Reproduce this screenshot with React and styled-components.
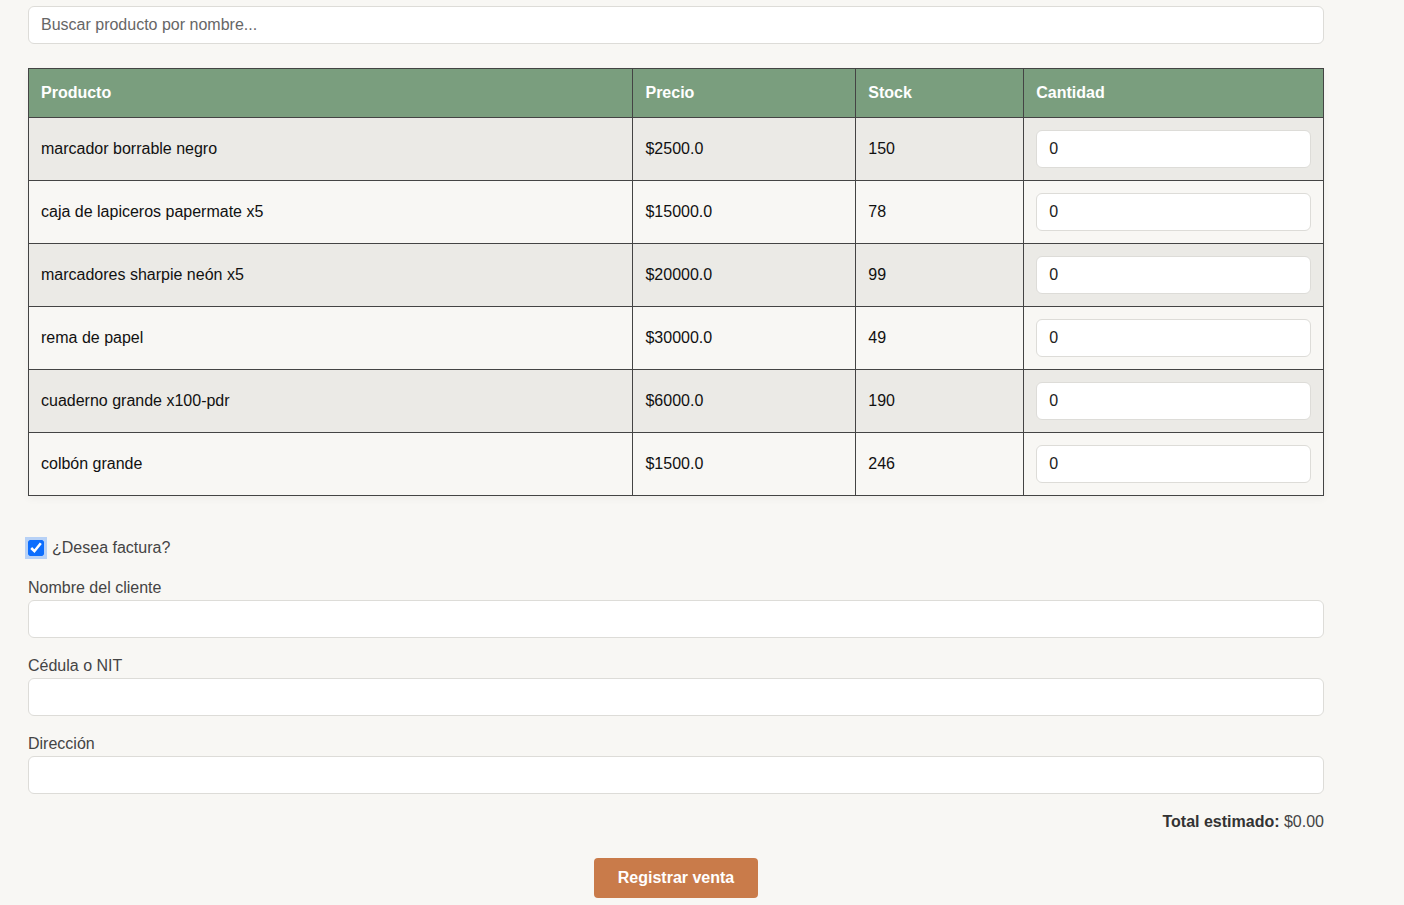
import styled, { createGlobalStyle } from "styled-components";
import { useState } from "react";

const GlobalStyle = createGlobalStyle`
  body {
    margin: 0;
    background: #f8f7f4;
    font-family: "Liberation Sans", Arial, sans-serif;
    color: #222;
  }
`;

const Page = styled.div`
  width: 1296px;
  padding: 6px 0 7px 28px;
`;

const TextInput = styled.input`
  box-sizing: border-box;
  display: block;
  width: 100%;
  height: 38px;
  padding: 0 12px;
  border: 1px solid #dddcd8;
  border-radius: 6px;
  background: #fff;
  font-family: inherit;
  font-size: 16px;
  color: #222;
  outline: none;
  &::placeholder {
    color: #666;
  }
`;

const Table = styled.table`
  width: 1296px;
  margin-top: 24px;
  border-collapse: collapse;
  box-shadow: 0 3px 8px rgba(0, 0, 0, 0.04);
  font-size: 16px;
`;

const Th = styled.th`
  width: ${(p) => p.w}px;
  height: 48px;
  padding: 0 12px;
  text-align: left;
  font-weight: bold;
  color: #fff;
  background: #7a9e7e;
  border: 1px solid #444;
`;

const Tr = styled.tr`
  background: ${(p) => (p.odd ? "#ebeae6" : "#f8f7f4")};
`;

const Td = styled.td`
  height: 62px;
  padding: 0 12px;
  border: 1px solid #444;
  color: #111;
`;

const QtyInput = styled(TextInput)`
  font-size: 16px;
`;

const CheckRow = styled.label`
  display: flex;
  align-items: center;
  gap: 8px;
  margin-top: 43px;
  font-size: 16px;
  color: #444;
`;

const Check = styled.input`
  width: 16px;
  height: 16px;
  margin: 0;
  accent-color: #0d6efd;
  border-radius: 3px;
  box-shadow: 0 0 0 3px rgba(13, 110, 253, 0.28);
`;

const Field = styled.div`
  margin-top: ${(p) => (p.first ? 22 : 19)}px;
`;

const Label = styled.div`
  font-size: 16px;
  line-height: 18px;
  margin-bottom: 3px;
  color: #444;
`;

const Total = styled.div`
  margin-top: 19px;
  text-align: right;
  font-size: 16px;
  color: #444;
  b {
    color: #333;
  }
`;

const Actions = styled.div`
  display: flex;
  justify-content: center;
  margin-top: 27px;
`;

const Button = styled.button`
  width: 164px;
  height: 40px;
  border: none;
  border-radius: 4px;
  background: #c97b4a;
  color: #fff;
  font-family: inherit;
  font-size: 16px;
  font-weight: bold;
  cursor: pointer;
`;

const productos = [
  { nombre: "marcador borrable negro", precio: "$2500.0", stock: 150 },
  { nombre: "caja de lapiceros papermate x5", precio: "$15000.0", stock: 78 },
  { nombre: "marcadores sharpie neón x5", precio: "$20000.0", stock: 99 },
  { nombre: "rema de papel", precio: "$30000.0", stock: 49 },
  { nombre: "cuaderno grande x100-pdr", precio: "$6000.0", stock: 190 },
  { nombre: "colbón grande", precio: "$1500.0", stock: 246 },
];

const App = () => {
  const [factura, setFactura] = useState(true);
  return (
    <Page>
      <GlobalStyle />
      <TextInput placeholder="Buscar producto por nombre..." />
      <Table>
        <thead>
          <tr>
            <Th w={580}>Producto</Th>
            <Th w={198}>Precio</Th>
            <Th w={143}>Stock</Th>
            <Th w={275}>Cantidad</Th>
          </tr>
        </thead>
        <tbody>
          {productos.map((p, i) => (
            <Tr key={p.nombre} odd={i % 2 === 0}>
              <Td>{p.nombre}</Td>
              <Td>{p.precio}</Td>
              <Td>{p.stock}</Td>
              <Td>
                <QtyInput defaultValue="0" />
              </Td>
            </Tr>
          ))}
        </tbody>
      </Table>
      <CheckRow>
        <Check type="checkbox" checked={factura} onChange={(e) => setFactura(e.target.checked)} />
        ¿Desea factura?
      </CheckRow>
      <Field first>
        <Label>Nombre del cliente</Label>
        <TextInput />
      </Field>
      <Field>
        <Label>Cédula o NIT</Label>
        <TextInput />
      </Field>
      <Field>
        <Label>Dirección</Label>
        <TextInput />
      </Field>
      <Total>
        <b>Total estimado:</b> $0.00
      </Total>
      <Actions>
        <Button>Registrar venta</Button>
      </Actions>
    </Page>
  );
};

export default App;
